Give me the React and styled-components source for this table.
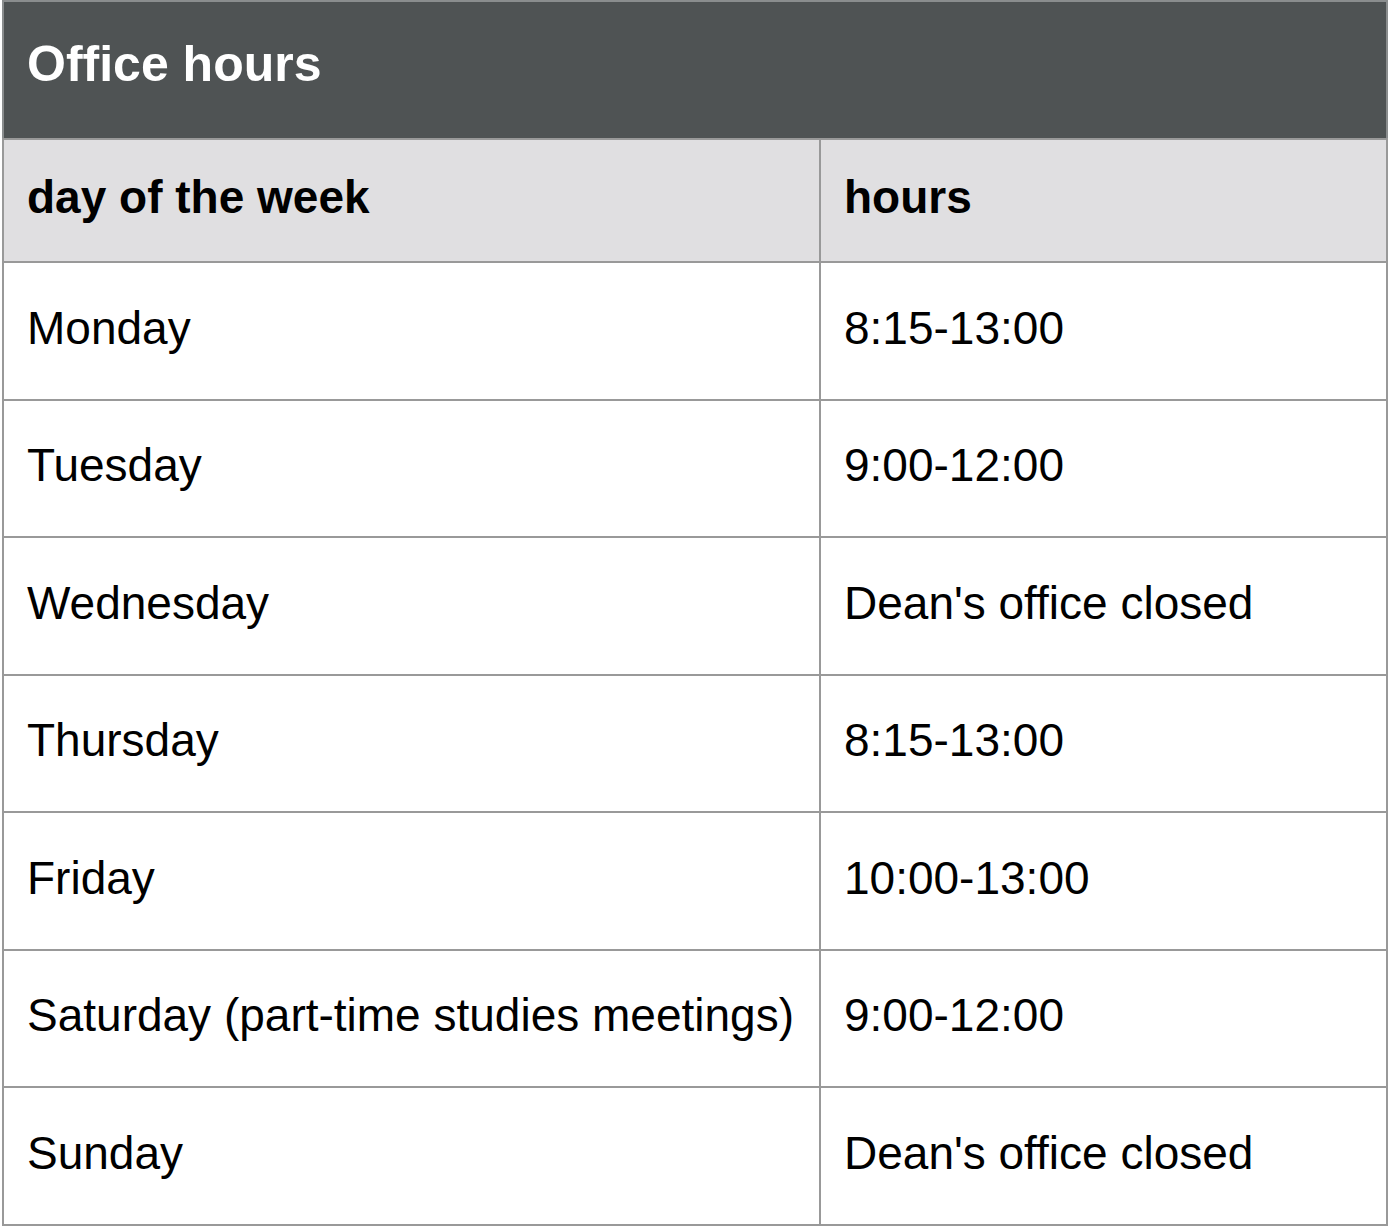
import React from 'react';
import styled, { createGlobalStyle } from 'styled-components';

const GlobalStyle = createGlobalStyle`
  body {
    margin: 0;
    background: #ffffff;
    font-family: "Liberation Sans", Arial, sans-serif;
  }
`;

const Page = styled.div`
  padding: 0 0 0 2px;
  width: 1388px;
  box-sizing: border-box;
`;

const Table = styled.table`
  width: 100%;
  border-collapse: collapse;
  table-layout: fixed;
  border: 2px solid #999999;
`;

const Caption = styled.caption`
  caption-side: top;
  background: #4f5354;
  color: #ffffff;
  text-align: left;
  font-weight: bold;
  font-size: 50px;
  height: 138px;
  line-height: 124px;
  padding: 0 23px;
  border: 2px solid #8a8d8e;
  border-bottom: none;
  box-sizing: border-box;
`;

const HeadRow = styled.tr`
  background: #e0dfe1;
  height: 123px;
`;

const Row = styled.tr`
  height: 137.5px;
`;

const Th = styled.th`
  text-align: left;
  font-weight: bold;
  font-size: 46px;
  color: #000000;
  padding: 0 23px 8px;
  border: 2px solid #999999;
  vertical-align: middle;
`;

const Td = styled.td`
  font-size: 46px;
  color: #000000;
  padding: 0 23px 6px;
  border: 2px solid #999999;
  vertical-align: middle;
  white-space: nowrap;
`;

const hours = [
  ['Monday', '8:15-13:00'],
  ['Tuesday', '9:00-12:00'],
  ['Wednesday', "Dean's office closed"],
  ['Thursday', '8:15-13:00'],
  ['Friday', '10:00-13:00'],
  ['Saturday (part-time studies meetings)', '9:00-12:00'],
  ['Sunday', "Dean's office closed"],
];

function App() {
  return (
    <Page>
      <GlobalStyle />
      <Table>
        <Caption>Office hours</Caption>
        <colgroup>
          <col style={{ width: '817px' }} />
          <col />
        </colgroup>
        <thead>
          <HeadRow>
            <Th>day of the week</Th>
            <Th>hours</Th>
          </HeadRow>
        </thead>
        <tbody>
          {hours.map(([day, time]) => (
            <Row key={day}>
              <Td>{day}</Td>
              <Td>{time}</Td>
            </Row>
          ))}
        </tbody>
      </Table>
    </Page>
  );
}

export default App;
